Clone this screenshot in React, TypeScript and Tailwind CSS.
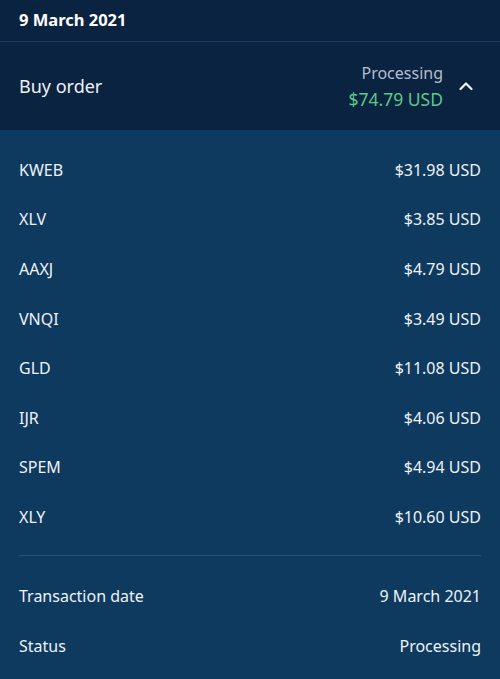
import React from "react";

const items: [string, string][] = [
  ["KWEB", "$31.98 USD"],
  ["XLV", "$3.85 USD"],
  ["AAXJ", "$4.79 USD"],
  ["VNQI", "$3.49 USD"],
  ["GLD", "$11.08 USD"],
  ["IJR", "$4.06 USD"],
  ["SPEM", "$4.94 USD"],
  ["XLY", "$10.60 USD"],
];

export default function App() {
  return (
    <div
      className="w-[500px] h-[679px] overflow-hidden bg-[#0e3a5f] text-[#eef2f6]"
      style={{ fontFamily: '"Noto Sans", "Open Sans", sans-serif' }}
    >
      <div className="bg-[#0a2341] h-[42px] flex items-center px-[19px] border-b border-[#1d3a5a]">
        <span className="text-[16.5px] font-bold text-white">9 March 2021</span>
      </div>
      <div className="bg-[#0a2341] h-[88px] flex items-center justify-between pl-[19px] pr-[27px]">
        <span className="text-[18px] text-[#eef2f6]">Buy order</span>
        <div className="flex items-center gap-[16px]">
          <div className="flex flex-col items-end leading-[27px]">
            <span className="text-[16px] text-[#b3bfcc]">Processing</span>
            <span className="text-[17.5px] text-[#5cc98a] -mt-[1px]">$74.79 USD</span>
          </div>
          <svg width="14" height="10" viewBox="0 0 14 10" fill="none">
            <path d="M1.5 8 L7 2.5 L12.5 8" stroke="#eef2f6" strokeWidth="2.2" strokeLinecap="round" strokeLinejoin="round" />
          </svg>
        </div>
      </div>
      <div className="px-[19px] pt-[15px]">
        {items.map(([k, v]) => (
          <div key={k} className="h-[49.6px] flex items-center justify-between text-[16px]">
            <span>{k}</span>
            <span>{v}</span>
          </div>
        ))}
        <div className="mt-[13px] border-t border-[#2a5073]" />
        <div className="pt-[15px]">
          <div className="h-[50px] flex items-center justify-between text-[16px]">
            <span>Transaction date</span>
            <span>9 March 2021</span>
          </div>
          <div className="h-[50px] flex items-center justify-between text-[16px]">
            <span>Status</span>
            <span>Processing</span>
          </div>
        </div>
      </div>
    </div>
  );
}
